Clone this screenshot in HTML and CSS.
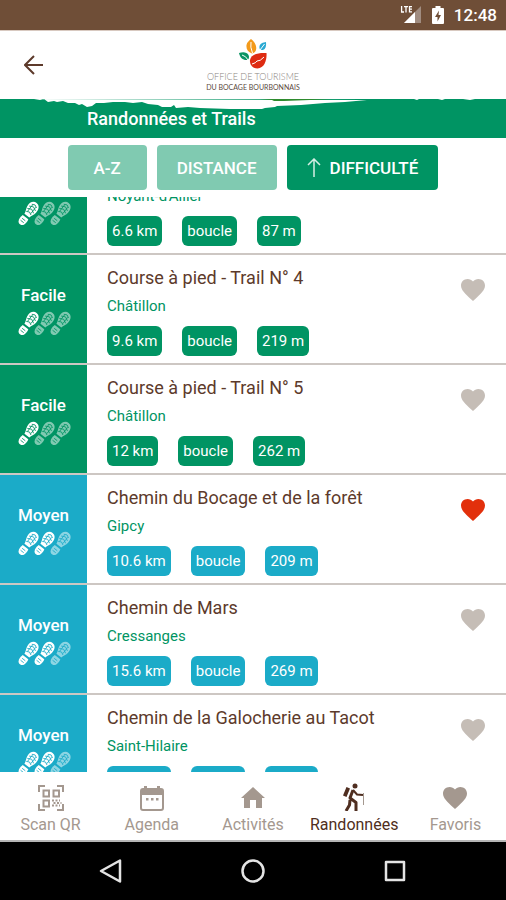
FILE: index.html
```html
<!DOCTYPE html>
<html lang="fr">
<head>
    <meta charset="UTF-8">
    <meta name="viewport" content="width=device-width, initial-scale=1.0">
    <title>Randonnées et Trails</title>
    <link rel="stylesheet" href="styles.css">
</head>
<body>
    <!-- shared icons -->
    <svg class="sprite" aria-hidden="true">
        <symbol id="shoe" viewBox="0 0 24 26">
            <g transform="rotate(38 12 13)">
                <path fill="currentColor" d="M12-1c4 0 6 4 5.500 8-.3 3-2 5-2.300 8H9c-.3-3-2-5-2.500-8C6 3 8-1 12-1z"/>
                <path fill="currentColor" d="M8.500 17h7c1 3 1 9-3.500 9s-4.500-6-3.500-9z"/>
                <g class="tread">
                    <path d="M9 3l3-1.500L15 3M8 6l4-2 4 2M8 9l4-2 4 2M9 12l3-1.500 3 1.500"/>
                    <path d="M10 3v8M14 3v8M10 20h4M10 22.500h4"/>
                </g>
            </g>
        </symbol>
        <symbol id="heart" viewBox="0 0 24 22">
            <path fill="currentColor" d="M12 22l-1.700-1.600C4.200 14.900 0 11.100 0 6.500 0 2.800 2.900 0 6.600 0 8.700 0 10.700 1 12 2.500 13.300 1 15.300 0 17.400 0 21.100 0 24 2.800 24 6.500c0 4.600-4.200 8.400-10.300 13.900z"/>
        </symbol>
        <symbol id="level-1" viewBox="0 0 56 26">
            <use href="#shoe" width="24" height="26"/>
            <use href="#shoe" x="16" width="24" height="26" opacity=".5"/>
            <use href="#shoe" x="32" width="24" height="26" opacity=".5"/>
        </symbol>
        <symbol id="level-2" viewBox="0 0 56 26">
            <use href="#shoe" width="24" height="26"/>
            <use href="#shoe" x="16" width="24" height="26"/>
            <use href="#shoe" x="32" width="24" height="26" opacity=".5"/>
        </symbol>
    </svg>

    <div class="status-bar">
        <svg width="22" height="20" viewBox="0 0 22 20">
            <path fill="#a08c80" d="M21 1v17H4z"/>
            <path fill="#fff" d="M15 7v11H4z"/>
            <path fill="none" stroke="#fff" stroke-width="1.300" d="M1.600 1v6H4M4 1.600h4M6 1.600V7.500M12 1.600H9.500v5.300H12M9.500 4.200H12"/>
        </svg>
        <svg width="12" height="18" viewBox="0 0 12 18">
            <path fill="#fff" d="M3.500 0h5v2H11q1 0 1 1v14q0 1-1 1H1q-1 0-1-1V3q0-1 1-1h2.500z"/>
            <path fill="#6f4e37" d="M7 4.500L3 11h2.500v4.500L9 9H6.500z"/>
        </svg>
        <span class="clock">12:48</span>
    </div>

    <header>
        <button class="back" aria-label="Retour">
            <svg width="20" height="20" viewBox="0 0 20 20">
                <path fill="none" stroke="#5d3a2b" stroke-width="2" d="M19 10H2M10 1l-9 9 9 9"/>
            </svg>
        </button>
        <div class="logo">
            <svg width="28" height="32" viewBox="0 0 28 32">
                <path fill="#f39a1b" d="M12 1c4 3 6 7 5 11-.5 2-2 3-4 3.500C9 14 7 11 7.500 7 8 4 10 3 12 1z"/>
                <path fill="none" stroke="#fff" d="M12 4q-1 5 1.500 11"/>
                <path fill="#2aa9d2" d="M27 4c.5 4-.5 7-3 8-3 .5-4-1.500-3.500-4C21 5.500 24 4.500 27 4z"/>
                <path fill="none" stroke="#fff" d="M25.500 6L21 12"/>
                <path fill="#0a9464" d="M0 15c4-1.500 8-1 9.500 2 1 2 .5 4-1 5C4 22.500 1 20 0 15z"/>
                <path fill="none" stroke="#fff" d="M3 17q4 1 6 5"/>
                <path fill="#de2b12" d="M27.500 15c.5 7-2 15-9 15.500-5 0-8-4-7.500-8.500C12 16 20 14.500 27.500 15z"/>
                <path fill="none" stroke="#fff" d="M13 26q4-1 5-3 3 .5 7-4"/>
            </svg>
            <span class="logo-title">OFFICE DE TOURISME</span>
            <span class="logo-subtitle">DU BOCAGE BOURBONNAIS</span>
        </div>
    </header>

    <div class="banner">
        <svg class="brush" viewBox="0 0 506 10" preserveAspectRatio="none">
            <path fill="#fff" d="M34 0l6 1 4-1 4 3 6-1 3 1 6-1 5 2 7 0 4 2 3-1 5 3 5-1 4-3 8 0 9-1 12 0 8 1 9-1 6 2 10 1 4 2 9 0 3-2 2 3 12-1 12 1 30 1h32l3-1 10-1 2-1 24-1 24-2 20-1 22-2z"/>
            <path fill="#2e8b2e" d="M260 0h72l-22 1-26 1-10 0-2-1z"/>
            <path fill="#fff" d="M414 0h5l-2 1zM438 0h7l-3 1zM463 0h12l-5 1z"/>
        </svg>
        <h1>Randonnées et Trails</h1>
    </div>

    <div class="sort-bar">
        <button>A-Z</button>
        <button>DISTANCE</button>
        <button class="active">
            <svg width="14" height="19" viewBox="0 0 14 19">
                <path fill="none" stroke="#d5eee4" stroke-width="1.500" d="M7 19V1M1 7l6-6 6 6"/>
            </svg>
            DIFFICULTÉ
        </button>
    </div>

    <main>
        <article class="hike cut">
            <div class="level">
                <svg width="56" height="26"><use href="#level-1"/></svg>
            </div>
            <div class="info">
                <p>Noyant-d'Allier</p>
                <div class="tags"><span>6.6 km</span><span>boucle</span><span>87 m</span></div>
            </div>
        </article>
        <article class="hike">
            <div class="level">
                Facile
                <svg width="56" height="26"><use href="#level-1"/></svg>
            </div>
            <div class="info">
                <h2>Course à pied - Trail N° 4</h2>
                <p>Châtillon</p>
                <div class="tags"><span>9.6 km</span><span>boucle</span><span>219 m</span></div>
            </div>
            <button class="fav" aria-label="Ajouter aux favoris"><svg width="24" height="22"><use href="#heart"/></svg></button>
        </article>
        <article class="hike">
            <div class="level">
                Facile
                <svg width="56" height="26"><use href="#level-1"/></svg>
            </div>
            <div class="info">
                <h2>Course à pied - Trail N° 5</h2>
                <p>Châtillon</p>
                <div class="tags"><span>12 km</span><span>boucle</span><span>262 m</span></div>
            </div>
            <button class="fav" aria-label="Ajouter aux favoris"><svg width="24" height="22"><use href="#heart"/></svg></button>
        </article>
        <article class="hike medium">
            <div class="level">
                Moyen
                <svg width="56" height="26"><use href="#level-2"/></svg>
            </div>
            <div class="info">
                <h2>Chemin du Bocage et de la forêt</h2>
                <p>Gipcy</p>
                <div class="tags"><span>10.6 km</span><span>boucle</span><span>209 m</span></div>
            </div>
            <button class="fav on" aria-label="Retirer des favoris"><svg width="24" height="22"><use href="#heart"/></svg></button>
        </article>
        <article class="hike medium">
            <div class="level">
                Moyen
                <svg width="56" height="26"><use href="#level-2"/></svg>
            </div>
            <div class="info">
                <h2>Chemin de Mars</h2>
                <p>Cressanges</p>
                <div class="tags"><span>15.6 km</span><span>boucle</span><span>269 m</span></div>
            </div>
            <button class="fav" aria-label="Ajouter aux favoris"><svg width="24" height="22"><use href="#heart"/></svg></button>
        </article>
        <article class="hike medium">
            <div class="level">
                Moyen
                <svg width="56" height="26"><use href="#level-2"/></svg>
            </div>
            <div class="info">
                <h2>Chemin de la Galocherie au Tacot</h2>
                <p>Saint-Hilaire</p>
                <div class="tags"><span>12.5 km</span><span>boucle</span><span>210 m</span></div>
            </div>
            <button class="fav" aria-label="Ajouter aux favoris"><svg width="24" height="22"><use href="#heart"/></svg></button>
        </article>
    </main>

    <nav class="tabs">
        <a href="#">
            <svg width="26" height="26" viewBox="0 0 26 26" fill="none" stroke="currentColor" stroke-width="2">
                <path d="M1 7V1h6M19 1h6v6M1 19v6h6M25 19v6h-6"/>
                <path d="M5.500 5.500h5.500v6H5.500zM15.500 5.500h5.500v6h-5.500zM5.500 15.500h5.500v6H5.500z"/>
                <path stroke-dasharray="2 1.500" d="M14 15.500h8M15.500 18h8M14 20.500h8"/>
            </svg>
            Scan QR
        </a>
        <a href="#">
            <svg width="24" height="26" viewBox="0 0 24 26">
                <path fill="none" stroke="currentColor" stroke-width="2" d="M3 4h18q2 0 2 2v17q0 2-2 2H3q-2 0-2-2V6q0-2 2-2z"/>
                <path fill="currentColor" d="M1 4h22v6H1zM4 1h3v4H4zM17 1h3v4h-3zM6 13h2.500v2.500H6zM11 13h2.500v2.500H11zM16 13h2.500v2.500H16z"/>
            </svg>
            Agenda
        </a>
        <a href="#">
            <svg width="26" height="26" viewBox="0 0 26 26">
                <path fill="currentColor" d="M13 2l12 11h-3v10h-6v-8h-6v8H4V13H1z"/>
            </svg>
            Activités
        </a>
        <a href="#" class="active">
            <svg width="24" height="28" viewBox="0 0 24 28">
                <circle cx="13" cy="3" r="2.500" fill="currentColor"/>
                <path fill="currentColor" d="M4.500 4L8 5.500 4.500 14 1 12.500z"/>
                <path fill="none" stroke="currentColor" stroke-width="3" stroke-linejoin="round" d="M11 7L8 15l6 4.500V28M8 17l-.5 5L4 28"/>
                <path fill="none" stroke="currentColor" stroke-width="2" d="M11 7l4 4.500 6 .5"/>
                <path fill="none" stroke="#a4988f" d="M21.500 10v12"/>
            </svg>
            Randonnées
        </a>
        <a href="#">
            <svg width="24" height="26" viewBox="0 0 24 26"><use href="#heart" y="2" width="24" height="22"/></svg>
            Favoris
        </a>
    </nav>

    <div class="system-nav">
        <button aria-label="Précédent">
            <svg width="24" height="24" viewBox="0 0 24 24"><path d="M21 1.500v21L2 12z"/></svg>
        </button>
        <button aria-label="Accueil">
            <svg width="24" height="24" viewBox="0 0 24 24"><circle cx="12" cy="12" r="10.500"/></svg>
        </button>
        <button aria-label="Applications">
            <svg width="24" height="24" viewBox="0 0 24 24"><path d="M3 3h18v18H3z"/></svg>
        </button>
    </div>
</body>
</html>
```

FILE: styles.css
```css
* {
    box-sizing: border-box;
}

body {
    font-family: Roboto, sans-serif;
    margin: 0;
    height: 100vh;
    display: flex;
    flex-direction: column;
    background-color: #fff;
    overflow: hidden;
}

button {
    font-family: inherit;
    border: none;
    padding: 0;
    background: none;
    cursor: pointer;
}

svg {
    display: block;
    flex-shrink: 0;
}

h1, h2, p {
    margin: 0;
}

.sprite {
    position: absolute;
    width: 0;
    height: 0;
}

.status-bar {
    height: 30px;
    flex-shrink: 0;
    display: flex;
    justify-content: flex-end;
    align-items: center;
    gap: 10px;
    padding-right: 9px;
    background-color: #6f4e37;
    color: #fff;
}

.clock {
    font-size: 17px;
    font-weight: 500;
}

header {
    height: 69px;
    flex-shrink: 0;
    display: grid;
    grid-template-columns: 1fr auto 1fr;
    align-items: center;
    padding: 0 24px;
    border-top: 1px solid #d8c9c0;
}

.back {
    justify-self: start;
}

.logo {
    display: flex;
    flex-direction: column;
    align-items: center;
    line-height: 10px;
}

.logo-title {
    font-family: Lato, sans-serif;
    font-weight: 300;
    font-size: 9px;
    color: #8a8580;
    margin-top: 2px;
}

.logo-subtitle {
    font-family: Lato, sans-serif;
    font-weight: 400;
    font-size: 7px;
    color: #5b4a40;
}

.banner {
    flex-shrink: 0;
    background-color: #009463;
}

.brush {
    width: 100%;
    height: 10px;
}

.banner h1 {
    font-size: 18px;
    line-height: 20px;
    font-weight: 500;
    color: #fff;
    padding: 0 87px 9px;
}

.sort-bar {
    flex-shrink: 0;
    display: flex;
    justify-content: center;
    gap: 10px;
    padding: 7px 0;
}

.sort-bar button {
    display: flex;
    align-items: center;
    justify-content: center;
    gap: 9px;
    min-width: 79px;
    height: 45px;
    padding: 0 20px;
    border-radius: 4px;
    background-color: #80cab1;
    color: #fff;
    font-size: 17px;
    font-weight: 500;
}

.sort-bar .active {
    background-color: #009463;
}

main {
    flex: 1;
    min-height: 0;
    overflow: hidden;
}

.hike {
    --level-color: #009463;
    display: flex;
    height: 110px;
    border-bottom: 2px solid #cdc7c3;
}

.hike.medium {
    --level-color: #1babc8;
}

/* first row is scrolled under the sort bar */
.hike.cut {
    height: 58px;
    overflow: hidden;
    align-items: flex-end;
}

.level {
    width: 87px;
    height: 108px;
    flex-shrink: 0;
    display: flex;
    flex-direction: column;
    align-items: center;
    justify-content: flex-end;
    gap: 5px;
    padding-bottom: 26px;
    background-color: var(--level-color);
    color: #fff;
    font-size: 17px;
    line-height: 22px;
    font-weight: 500;
}

.tread {
    fill: none;
    stroke: var(--level-color);
    stroke-width: 0.8;
}

.info {
    flex: 1;
    display: flex;
    flex-direction: column;
    justify-content: flex-end;
    padding: 0 0 7px 20px;
}

.info h2 {
    font-size: 18px;
    line-height: 24px;
    font-weight: 400;
    color: #5d3a2b;
}

.info p {
    font-size: 15px;
    line-height: 20px;
    margin: 6px 0 10px;
    color: #009463;
}

.tags {
    display: flex;
    gap: 20px;
}

.tags span {
    padding: 0 5px;
    border-radius: 6px;
    background-color: var(--level-color);
    color: #fff;
    font-size: 15px;
    line-height: 30px;
}

.fav {
    align-self: flex-start;
    margin: 24px 21px 0 0;
    color: #c5bdb6;
}

.fav.on {
    color: #e2300c;
}

.tabs {
    height: 70px;
    flex-shrink: 0;
    display: grid;
    grid-template-columns: repeat(5, 1fr);
    border-bottom: 2px solid #b5b5b5;
}

.tabs a {
    display: flex;
    flex-direction: column;
    align-items: center;
    justify-content: flex-end;
    gap: 4px;
    padding-bottom: 5px;
    color: #a4988f;
    font-size: 16px;
    line-height: 20px;
    text-decoration: none;
}

.tabs .active {
    color: #4f2e20;
}

.system-nav {
    height: 58px;
    flex-shrink: 0;
    display: flex;
    justify-content: center;
    align-items: center;
    gap: 118px;
    background-color: #000;
}

.system-nav svg {
    fill: none;
    stroke: #e4e4e4;
    stroke-width: 2.5;
    stroke-linejoin: round;
}
```
